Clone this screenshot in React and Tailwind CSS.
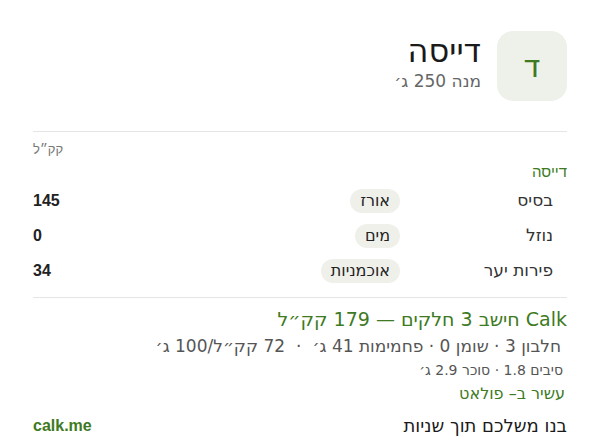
import React from "react";

const ROWS = [
  { label: "בסיס", item: "אורז", kcal: 145 },
  { label: "נוזל", item: "מים", kcal: 0 },
  { label: "פירות יער", item: "אוכמניות", kcal: 34 },
];

const he = { fontFamily: '"DejaVu Sans", sans-serif' };
const latin = { fontFamily: '"Liberation Sans", Arial, sans-serif' };

export default function App() {
  return (
    <div dir="rtl" className="w-[600px] h-[448px] bg-white text-[#1f1f1f] px-[33px] pt-[31px] overflow-hidden" style={he}>
      {/* header: letter badge + dish name */}
      <div className="flex items-start gap-4 h-[100px]">
        <div className="w-[70px] h-[70px] rounded-2xl bg-[#eef1ea] flex items-center justify-center text-[31px] font-medium text-[#3d7a22]">
          ד
        </div>
        <div className="pt-[1px]">
          <div className="text-[32px] leading-[38px] text-[#1a1a1a]">דייסה</div>
          <div className="text-[17px] leading-[22px] text-[#666]">מנה 250 ג׳</div>
        </div>
      </div>

      <div className="border-t border-[#e5e5e5]"></div>

      <div className="text-left text-[13px] leading-[16px] text-[#777] mt-[10px]" style={latin}>קק״ל</div>
      <div className="text-[15px] leading-[18px] text-[#3d7a22] mt-[5px]" style={latin}>דייסה</div>

      <div className="mt-[2px]">
        {ROWS.map((r) => (
          <div key={r.label} className="flex items-center h-[35px] pr-[14px]">
            <div className="w-[153px] text-[17px] text-[#333]">{r.label}</div>
            <div className="flex-1">
              <span className="inline-block bg-[#f0f0eb] rounded-full px-[10px] h-[24px] leading-[24px] text-[16px] text-[#222]">
                {r.item}
              </span>
            </div>
            <div className="font-bold text-[16px] text-[#222]" style={latin}>{r.kcal}</div>
          </div>
        ))}
      </div>

      <div className="border-t border-[#e5e5e5] mt-[9px]"></div>

      {/* summary */}
      <div className="text-[19px] leading-[26px] text-[#3d7a22] mt-[8px]">Calk חישב 3 חלקים — 179 קק״ל</div>
      <div className="flex gap-[11px] pr-[6px] text-[17px] leading-[24px] text-[#555] mt-[2px]">
        <span>חלבון 3 · שומן 0 · פחמימות 41 ג׳</span>
        <span>·</span>
        <span>72 קק״ל/100 ג׳</span>
      </div>
      <div className="pr-[4px] text-[14px] leading-[22px] text-[#555] mt-[1px]">סיבים 1.8 · סוכר 2.9 ג׳</div>
      <div className="pr-[2px] text-[16px] leading-[24px] text-[#3d7a22] mt-[1px]">עשיר ב– פולאט</div>

      <div className="flex items-center justify-between mt-[6px]">
        <div className="text-[18px] text-[#1a1a1a]">בנו משלכם תוך שניות</div>
        <div className="font-bold text-[16px] text-[#3d7a22]" style={latin}>calk.me</div>
      </div>
    </div>
  );
}
